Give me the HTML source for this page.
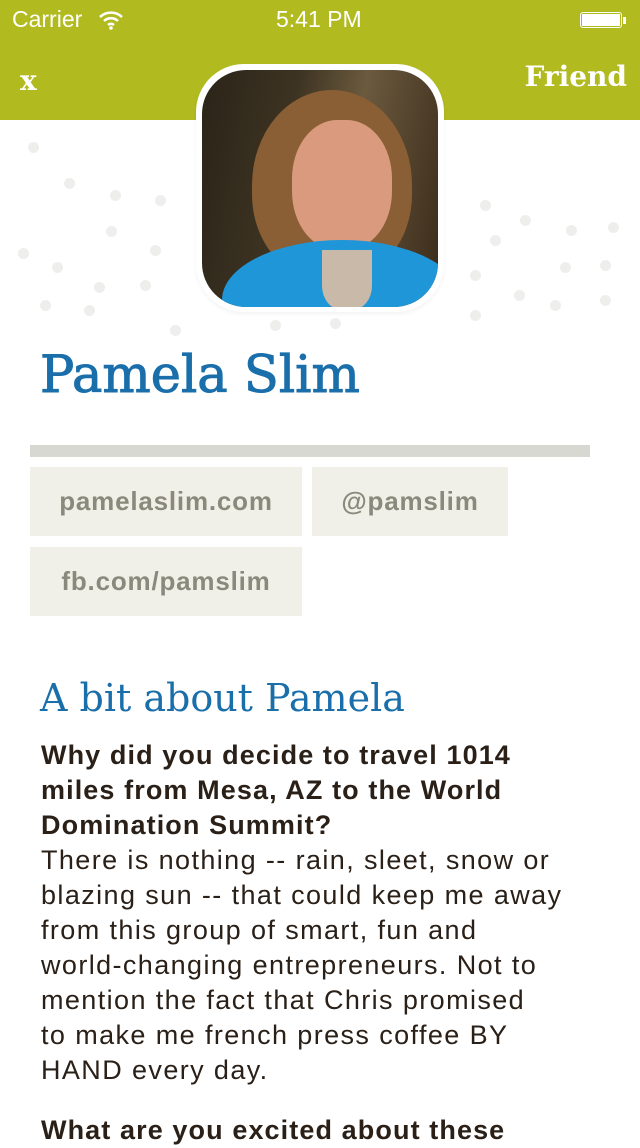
<!DOCTYPE html>
<html><head><meta charset="utf-8"><style>
body{margin:0;width:640px;height:1136px;overflow:hidden;background:#fff;font-family:"Liberation Sans",sans-serif;position:relative}
.nav{position:absolute;left:0;top:0;width:640px;height:120px;background:#b1ba1f;color:#fff}
.sb{position:absolute;top:6px;font-size:23px}
.dot{position:absolute;border-radius:50%;background:#eeeeec;width:11px;height:11px}
.av{position:absolute;left:196px;top:64px;width:248px;height:248px;border-radius:48px;background:#fff;box-shadow:0 2px 4px rgba(0,0,0,.05)}
.img{position:absolute;left:6px;top:6px;width:236px;height:237px;border-radius:44px;overflow:hidden;background:linear-gradient(100deg,#2a2418 0%,#3d3322 35%,#6b5a3e 60%,#3a2a1a 100%)}
h1{position:absolute;left:40px;top:346px;margin:0;font-family:"DejaVu Serif",serif;font-weight:normal;font-size:51px;color:#1a6fab;-webkit-text-stroke:1px #1a6fab}
.bar{position:absolute;left:30px;top:445px;width:560px;height:12px;background:#d8d8d3}
.chip{position:absolute;height:69px;background:#f1f0e8;color:#8a8a7c;font-weight:bold;font-size:26px;line-height:69px;text-align:center;letter-spacing:.8px}
h2{position:absolute;left:40px;top:676px;margin:0;font-family:"DejaVu Serif",serif;font-weight:normal;font-size:38px;color:#1a6fab}
.txt{position:absolute;left:41px;top:738px;width:590px;font-size:27px;line-height:35px;color:#2a2018;letter-spacing:1.4px;white-space:nowrap}
.txt b{letter-spacing:1.1px}
</style></head><body>
<div class="nav">
<div class="sb" style="left:12px">Carrier</div>
<svg style="position:absolute;left:98px;top:10px" width="26" height="20" viewBox="0 0 26 20"><path d="M2 7a16 16 0 0 1 22 0M6 11a10 10 0 0 1 14 0M10 15a4.5 4.5 0 0 1 6 0" stroke="#fff" stroke-width="2.6" fill="none"/><circle cx="13" cy="18" r="1.8" fill="#fff"/></svg>
<div class="sb" style="left:276px;font-weight:normal">5:41 PM</div>
<div style="position:absolute;left:580px;top:12px;width:42px;height:16px;border:1.5px solid #fff;border-radius:3px;padding:1px;box-sizing:border-box"><div style="width:100%;height:100%;background:#fff"></div></div>
<div style="position:absolute;left:623px;top:17px;width:3px;height:7px;background:#fff"></div>
<div style="position:absolute;left:20px;top:64px;font-family:'DejaVu Serif',serif;font-weight:bold;font-size:28px">x</div>
<div style="position:absolute;right:13px;top:60px;font-family:'DejaVu Serif',serif;font-weight:bold;font-size:28px">Friend</div>
</div>
<div class="dot" style="left:28px;top:142px"></div><div class="dot" style="left:64px;top:178px"></div><div class="dot" style="left:106px;top:226px"></div><div class="dot" style="left:18px;top:248px"></div><div class="dot" style="left:52px;top:262px"></div><div class="dot" style="left:94px;top:282px"></div><div class="dot" style="left:40px;top:300px"></div><div class="dot" style="left:140px;top:280px"></div><div class="dot" style="left:150px;top:245px"></div><div class="dot" style="left:110px;top:190px"></div><div class="dot" style="left:155px;top:195px"></div><div class="dot" style="left:84px;top:305px"></div><div class="dot" style="left:170px;top:325px"></div>
<div class="dot" style="left:480px;top:200px"></div><div class="dot" style="left:520px;top:215px"></div><div class="dot" style="left:566px;top:225px"></div><div class="dot" style="left:608px;top:222px"></div><div class="dot" style="left:490px;top:235px"></div><div class="dot" style="left:560px;top:262px"></div><div class="dot" style="left:600px;top:260px"></div><div class="dot" style="left:470px;top:270px"></div><div class="dot" style="left:514px;top:290px"></div><div class="dot" style="left:550px;top:300px"></div><div class="dot" style="left:470px;top:310px"></div><div class="dot" style="left:600px;top:295px"></div><div class="dot" style="left:330px;top:318px"></div><div class="dot" style="left:270px;top:320px"></div>
<div class="av"><div class="img">
<div style="position:absolute;left:50px;top:20px;width:160px;height:190px;border-radius:50% 50% 45% 45%;background:#8a5f35"></div>
<div style="position:absolute;left:90px;top:50px;width:100px;height:130px;border-radius:45%;background:#d99a7e"></div>
<div style="position:absolute;left:20px;top:170px;width:240px;height:120px;border-radius:50% 50% 0 0;background:#1f96d8"></div>
<div style="position:absolute;left:120px;top:180px;width:50px;height:60px;background:#c9b9a8;border-radius:0 0 40% 40%"></div>
</div></div>
<h1>Pamela Slim</h1>
<div class="bar"></div>
<div class="chip" style="left:30px;top:467px;width:272px">pamelaslim.com</div>
<div class="chip" style="left:312px;top:467px;width:196px">@pamslim</div>
<div class="chip" style="left:30px;top:547px;width:272px">fb.com/pamslim</div>
<h2>A bit about Pamela</h2>
<div class="txt"><b>Why did you decide to travel 1014<br>miles from Mesa, AZ to the World<br>Domination Summit?</b><br>There is nothing -- rain, sleet, snow or<br>blazing sun -- that could keep me away<br>from this group of smart, fun and<br>world-changing entrepreneurs. Not to<br>mention the fact that Chris promised<br>to make me french press coffee BY<br>HAND every day.<div style="height:25px"></div><b>What are you excited about these</b></div>
</body></html>
